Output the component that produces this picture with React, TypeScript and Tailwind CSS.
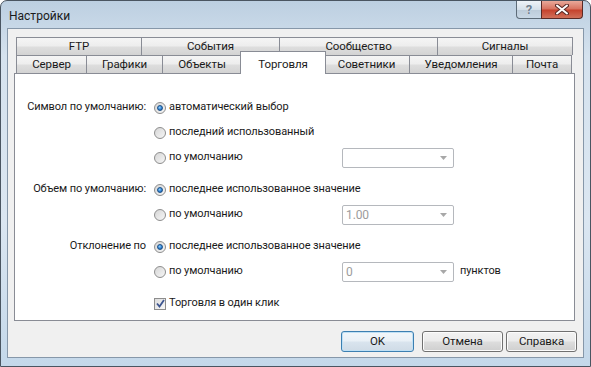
import React from "react";

const tabBg =
  "bg-[linear-gradient(#f5f5f5,#ededed_48%,#dedede_52%,#d3d3d3)]";

function Tab({ label, w, selected }: { label: string; w: string; selected?: boolean }) {
  if (selected) {
    return (
      <div
        className={`relative z-10 -mx-[2px] -mb-px flex h-[23px] shrink-0 self-end justify-center border border-b-0 border-[#898c95] bg-white pt-[4px] ${w}`}
      >
        {label}
      </div>
    );
  }
  return (
    <div
      className={`-ml-px flex h-[18px] shrink-0 items-center justify-center border border-b-0 border-[#898c95] first:ml-0 ${tabBg} ${w}`}
    >
      {label}
    </div>
  );
}

function Radio({ checked }: { checked?: boolean }) {
  return (
    <div className="flex h-[12px] w-[12px] shrink-0 items-center justify-center rounded-full border border-[#8d8d8d] bg-[linear-gradient(135deg,#d6d6d6,#f6f6f6)]">
      {checked && (
        <div className="h-[6px] w-[6px] rounded-full border border-[#1b4f86] bg-[radial-gradient(circle_at_40%_35%,#8fd0ff,#2d7ed0_60%,#16518f)]" />
      )}
    </div>
  );
}

function Select({ value }: { value?: string }) {
  return (
    <div className="flex h-[20px] w-[112px] shrink-0 items-center justify-between rounded-[2px] border border-[#b5b8bd] bg-white pl-[3px] pr-[6px] text-[12px] text-[#9c9c9c]">
      <span>{value ?? ""}</span>
      <svg width="7" height="4" viewBox="0 0 7 4">
        <path d="M0 0H7L3.5 4Z" fill="#a8a8a8" />
      </svg>
    </div>
  );
}

function Row({
  label,
  checked,
  text,
  select,
  suffix,
  gap,
}: {
  label?: string;
  checked?: boolean;
  text: string;
  select?: string | null;
  suffix?: string;
  gap?: boolean;
}) {
  return (
    <div className={`flex h-[25px] items-center ${gap ? "mt-[7px]" : ""}`}>
      <div className="w-[131px] shrink-0 whitespace-nowrap text-right">{label}</div>
      <div className="ml-[8px] flex w-[188px] shrink-0 items-center gap-[3px]">
        <Radio checked={checked} />
        <span className="whitespace-nowrap">{text}</span>
      </div>
      {select !== undefined && <Select value={select ?? undefined} />}
      {suffix && <span className="ml-[6px]">{suffix}</span>}
    </div>
  );
}

function Button({ label, w, def }: { label: string; w: string; def?: boolean }) {
  return (
    <div
      className={`flex h-[21px] items-center justify-center rounded-[3px] border text-[11.5px] ${w} ${
        def
          ? "border-[#3c7fb1] bg-[linear-gradient(#f1f6fa,#e9f0f6_48%,#d9e4ee_52%,#cfdbe6)] shadow-[inset_0_0_0_1px_#bfe0f5]"
          : "border-[#707070] bg-[linear-gradient(#f2f2f2,#ebebeb_48%,#dddddd_52%,#cfcfcf)] shadow-[inset_0_0_0_1px_#fcfcfc]"
      }`}
    >
      {label}
    </div>
  );
}

export default function App() {
  return (
    <div className="h-[367px] w-[591px] bg-white font-['Roboto',Arial,sans-serif] text-[11px] tracking-[-0.1px] text-[#1a1a1a]">
      <div className="flex h-[367px] w-[591px] flex-col rounded-t-[7px] border border-[#4a5561] bg-[linear-gradient(#bccfe1,#d5e2ee_15%,#dbe6f1_60%,#c4d8ea)]">
        {/* title bar */}
        <div className="flex h-[27px] shrink-0 items-start justify-between pl-[8px]">
          <span className="mt-[6px] text-[12px] tracking-normal text-[#1a1a1a]">Настройки</span>
          <div className="mr-[7px] flex">
            <div className="flex h-[18px] w-[26px] items-center justify-center rounded-bl-[4px] border border-t-0 border-[#5d6b78] bg-[linear-gradient(#eef3f8,#d5e0ea_50%,#bccbd9_52%,#c9d8e6)]">
              <span className="text-[13px] font-bold leading-none text-[#6f7f8f] [text-shadow:0_0_1px_#fff]">?</span>
            </div>
            <div className="-ml-px flex h-[18px] w-[42px] items-center justify-center rounded-br-[4px] border border-t-0 border-[#5a2a26] bg-[linear-gradient(#e9a99a,#d7715e_48%,#c5412c_52%,#d0705a)]">
              <svg width="14" height="11" viewBox="0 0 14 11">
                <path d="M2 1.5L12 9.5M12 1.5L2 9.5" stroke="#5a2a26" strokeWidth="4" strokeLinecap="round" />
                <path d="M2 1.5L12 9.5M12 1.5L2 9.5" stroke="#ffffff" strokeWidth="2" strokeLinecap="round" />
              </svg>
            </div>
          </div>
        </div>

        {/* client area */}
        <div className="mx-[6px] mb-[8px] flex flex-1 flex-col border border-[#8697a9] bg-[#f0f0f0]">
          <div className="ml-[6px] mt-[8px] w-[561px] text-[11.5px]">
            <div className="flex h-[18px] pl-[2px]">
              <Tab label="FTP" w="w-[126px]" />
              <Tab label="События" w="w-[139px]" />
              <Tab label="Сообщество" w="w-[159px]" />
              <Tab label="Сигналы" w="w-[136px]" />
            </div>
            <div className="flex h-[18px] pl-[2px]">
              <Tab label="Сервер" w="w-[71px]" />
              <Tab label="Графики" w="w-[77px]" />
              <Tab label="Объекты" w="w-[80px]" />
              <Tab label="Торговля" w="w-[86px]" selected />
              <Tab label="Советники" w="w-[87px]" />
              <Tab label="Уведомления" w="w-[104px]" />
              <Tab label="Почта" w="w-[60px]" />
            </div>
            <div className="h-[248px] border border-[#898c95] bg-white pt-[21px] text-[11px]">
              <Row label="Символ по умолчанию:" checked text="автоматический выбор" />
              <Row text="последний использованный" />
              <Row text="по умолчанию" select={null} />
              <Row gap label="Объем по умолчанию:" checked text="последнее использованное значение" />
              <Row text="по умолчанию" select="1.00" />
              <Row gap label="Отклонение по" checked text="последнее использованное значение" />
              <Row text="по умолчанию" select="0" suffix="пунктов" />
              <div className="mt-[7px] flex h-[25px] items-center">
                <div className="ml-[139px] flex items-center gap-[3px]">
                  <div className="flex h-[12px] w-[12px] items-center justify-center border border-[#8d8d8d] bg-[linear-gradient(135deg,#dcdcdc,#f8f8f8)]">
                    <svg width="9" height="9" viewBox="0 0 9 9">
                      <path d="M1 4.5L3.5 7.5L8 1" stroke="#3d5590" strokeWidth="1.8" fill="none" />
                    </svg>
                  </div>
                  <span className="whitespace-nowrap">Торговля в один клик</span>
                </div>
              </div>
            </div>
          </div>

          <div className="mt-[10px] flex justify-end pr-[6px]">
            <Button label="OK" w="w-[73px]" def />
            <div className="w-[8px]" />
            <Button label="Отмена" w="w-[81px]" />
            <div className="w-[3px]" />
            <Button label="Справка" w="w-[71px]" />
          </div>
        </div>
      </div>
    </div>
  );
}
